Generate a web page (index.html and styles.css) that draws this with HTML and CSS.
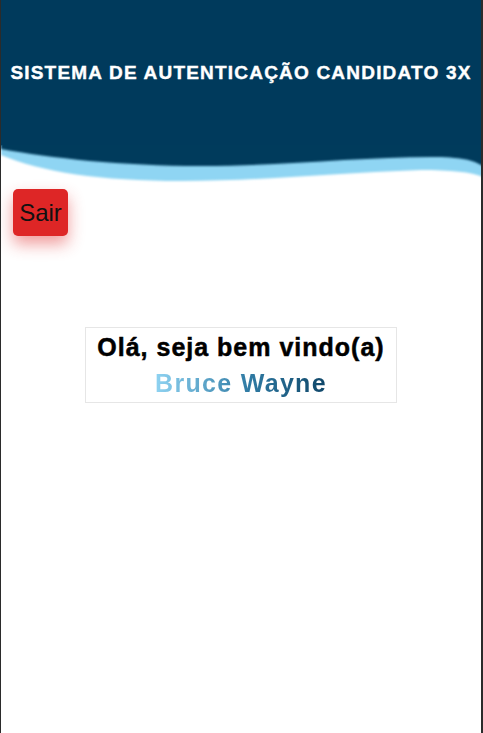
FILE: index.html
```html
<!DOCTYPE html>
<html lang="pt-BR">
<head>
<meta charset="utf-8">
<title>Sistema de Autenticação</title>
<link rel="stylesheet" href="styles.css">
</head>
<body>
<div class="frame">
  <header class="header">
    <div class="header-bar">
      <h1 class="title">SISTEMA DE AUTENTICAÇÃO CANDIDATO 3X</h1>
    </div>
    <svg class="wave" viewBox="0 0 480 45" preserveAspectRatio="none" width="480" height="45">
      <defs>
        <filter id="soft" x="-5%" y="-20%" width="110%" height="140%">
          <feGaussianBlur stdDeviation="0.8"/>
        </filter>
      </defs>
      <path filter="url(#soft)" fill="#8fd5f3" d="M0,-2 L0,10 C40,27 100,36 180,36 C260,36 330,28 420,25 C450,25 470,27 482,32 L482,-2 Z"/>
      <path filter="url(#soft)" fill="#003a5c" d="M0,-2 L0,4 C50,13 120,21 200,21 C280,21 360,12 430,12 C460,12 472,15 482,21 L482,-2 Z"/>
    </svg>
  </header>
  <div class="actions">
    <button class="btn-exit" type="button">Sair</button>
  </div>
  <main class="content">
    <section class="welcome">
      <p class="greet">Olá, seja bem vindo(a)</p>
      <p class="name">Bruce Wayne</p>
    </section>
  </main>
</div>
</body>
</html>
```
FILE: styles.css
```css
html, body {
  margin: 0;
  padding: 0;
  background: #ffffff;
}

body {
  font-family: "Liberation Sans", Arial, sans-serif;
}

.frame {
  min-height: 733px;
  box-sizing: border-box;
  border-left: 1px solid #2b2b2b;
  border-right: 2px solid #2b2b2b;
  overflow: hidden;
}

.header {
  display: flex;
  flex-direction: column;
}

.header-bar {
  background: #003a5c;
  height: 146px;
  display: flex;
  align-items: center;
  justify-content: center;
}

.title {
  margin: 0;
  color: #ffffff;
  font-size: 19px;
  font-weight: bold;
  letter-spacing: 1.2px;
  white-space: nowrap;
  -webkit-text-stroke: 0.4px #ffffff;
}

.wave {
  display: block;
  width: 480px;
  height: 45px;
  margin-top: -1px;
}

.actions {
  padding: 0 0 0 12px;
  margin-top: -1px;
}

.btn-exit {
  font-family: "Liberation Sans", Arial, sans-serif;
  font-size: 24px;
  color: #111111;
  background: #de2626;
  border: none;
  border-radius: 5px;
  width: 55px;
  height: 47px;
  padding: 0;
  box-shadow: 0 8px 16px rgba(222, 38, 38, 0.45);
}

.content {
  display: flex;
  justify-content: center;
  padding-top: 91px;
}

.welcome {
  width: 310px;
  height: 74px;
  border: 1px solid #e6e6e6;
  display: flex;
  flex-direction: column;
  align-items: center;
  justify-content: center;
  gap: 7px;
}

.greet,
.name {
  margin: 0;
  font-size: 25px;
  font-weight: bold;
  line-height: 29px;
}

.greet {
  color: #000000;
  letter-spacing: 1px;
  -webkit-text-stroke: 0.5px #000000;
}

.name {
  letter-spacing: 1.3px;
  background: linear-gradient(90deg, #8fd3f2 0%, #2f7aa3 55%, #0f4668 100%);
  -webkit-background-clip: text;
  background-clip: text;
  color: transparent;
}
```
